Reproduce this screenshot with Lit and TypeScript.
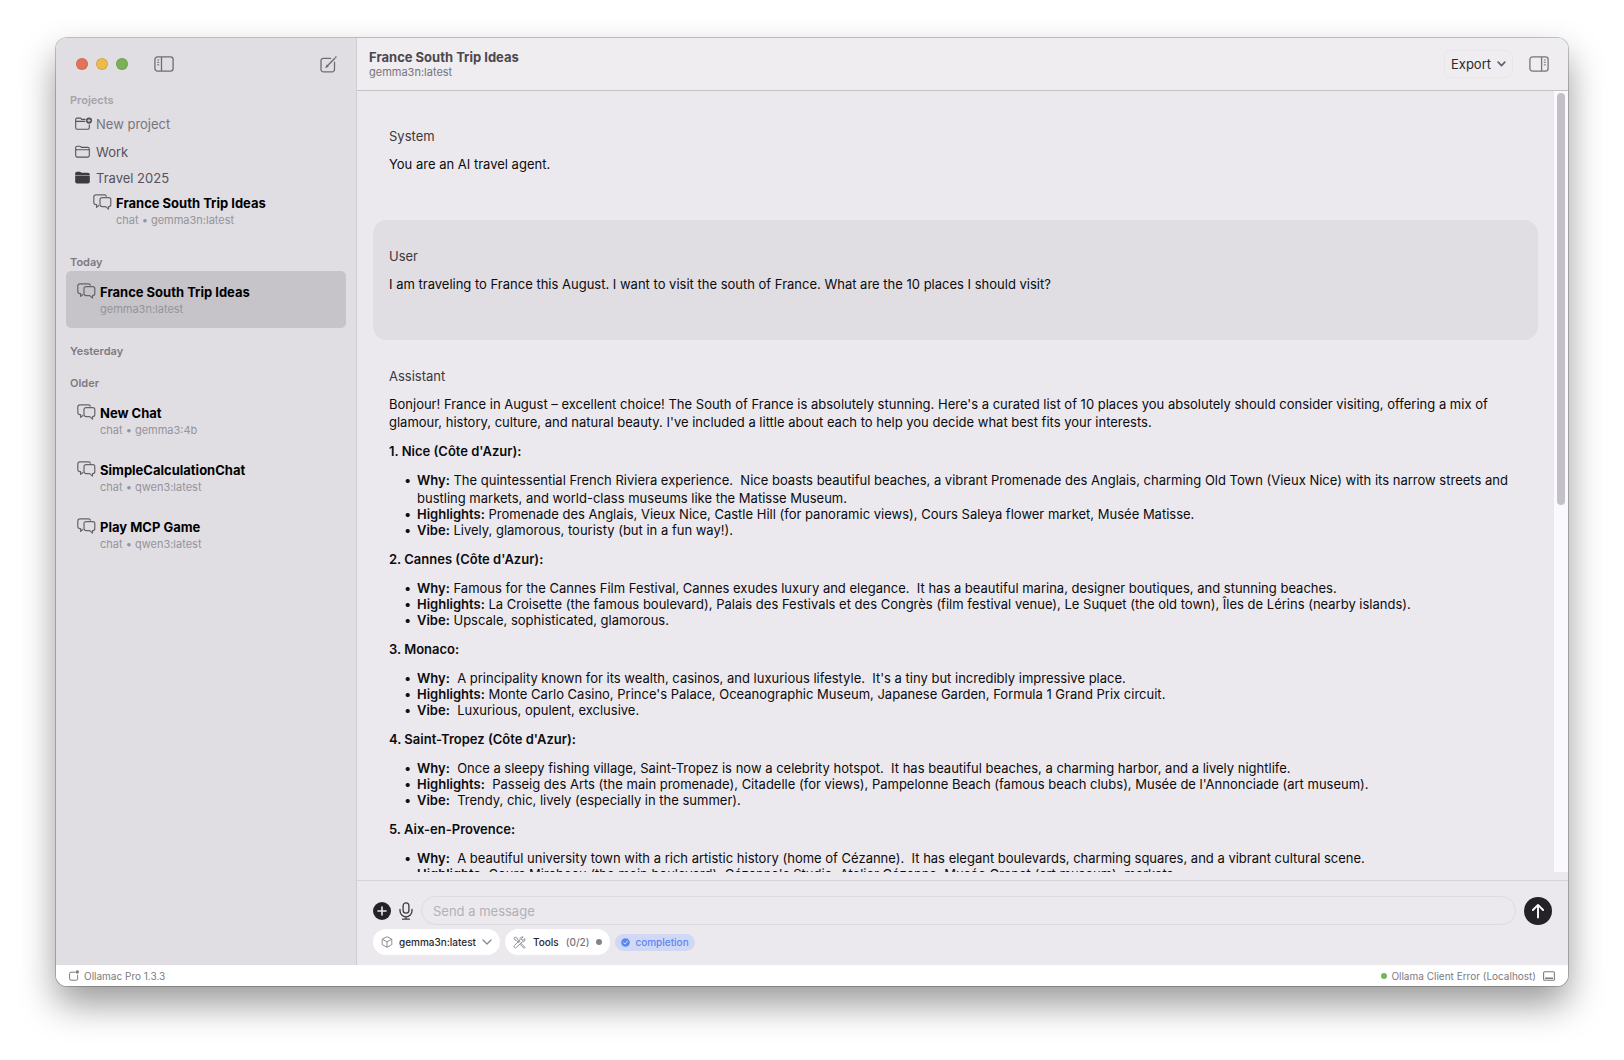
import { LitElement, html, css, svg } from "lit";
import { customElement, property } from "lit/decorators.js";

const NB = "\u00a0";

const icons: Record<string, unknown> = {
  sidebarLeft: svg`<svg width="20" height="16" viewBox="0 0 20 16" fill="none" stroke="currentColor" stroke-width="1.3"><rect x="0.9" y="0.9" width="18.2" height="14.2" rx="2.6"/><path d="M7.5 1v14"/><path d="M3.2 4h2M3.2 6.4h2M3.2 8.8h2" stroke-width="1"/></svg>`,
  sidebarRight: svg`<svg width="20" height="16" viewBox="0 0 20 16" fill="none" stroke="currentColor" stroke-width="1.3"><rect x="0.9" y="0.9" width="18.2" height="14.2" rx="2.6"/><path d="M12.6 1v14"/><path d="M14.8 4h2M14.8 6.4h2M14.8 8.8h2" stroke-width="1"/></svg>`,
  compose: svg`<svg width="17" height="17" viewBox="0 0 17 17" fill="none" stroke="currentColor" stroke-width="1.3" stroke-linecap="round"><path d="M10.6 2.3H3.4A2.4 2.4 0 0 0 1 4.7v8.7a2.4 2.4 0 0 0 2.4 2.4h8.7a2.4 2.4 0 0 0 2.4-2.4V6.2"/><path d="M7 10.2l7.6-7.7M6.4 10.9l.5-1.2.7.7z" stroke-width="1.4"/><path d="M15.7 1.3l.2-.2" stroke-width="1.6"/></svg>`,
  folderPlus: svg`<svg width="18" height="14" viewBox="0 0 18 14" fill="none" stroke="currentColor" stroke-width="1.1"><path d="M10.5 2.4H6.8L5.5 1.1H2A1.3 1.3 0 0 0 .7 2.4v8.4a1.5 1.5 0 0 0 1.5 1.5h10.6a1.5 1.5 0 0 0 1.5-1.5V7.6"/><path d="M.8 4.4h9.4"/><circle cx="14" cy="3.6" r="3.1" fill="currentColor" stroke="none"/><path d="M14 2.1v3M12.5 3.6h3" stroke="#e0dee3" stroke-width="0.9"/></svg>`,
  folder: svg`<svg width="16" height="14" viewBox="0 0 16 14" fill="none" stroke="currentColor" stroke-width="1.1"><path d="M.7 2.6A1.4 1.4 0 0 1 2.1 1.2h2.6c.4 0 .7.1 1 .4l.8.8h6.3a1.5 1.5 0 0 1 1.5 1.5v6.7a1.5 1.5 0 0 1-1.5 1.5H2.2a1.5 1.5 0 0 1-1.5-1.5z"/><path d="M.8 4.8h13.4"/></svg>`,
  folderFill: svg`<svg width="16" height="14" viewBox="0 0 16 14" fill="currentColor"><path d="M.2 3.9V2.6A1.8 1.8 0 0 1 2 .8h2.7c.5 0 .9.2 1.3.5l.6.5h6.3a1.9 1.9 0 0 1 1.9 1.9v.2z"/><path d="M.2 4.6h14.6v6.2a1.8 1.8 0 0 1-1.8 1.8H2a1.8 1.8 0 0 1-1.8-1.8z"/></svg>`,
  chats: svg`<svg width="19" height="16" viewBox="0 0 19 16" fill="none" stroke="currentColor" stroke-width="1.2" stroke-linejoin="round"><path d="M6.2 11.2L3.6 13.4v-2.8H2.8A2 2 0 0 1 .8 8.600V2.900a2 2 0 0 1 2-2h8.700a2 2 0 0 1 2 1.700"/><path d="M9 3.700h6.800a2 2 0 0 1 2 2v4.900a2 2 0 0 1-2 2h-.3v2.500l-2.800-2.500H9a2 2 0 0 1-2-2V5.700a2 2 0 0 1 2-2z"/></svg>`,
  chevronBold: svg`<svg width="9" height="6" viewBox="0 0 9 6" fill="none" stroke="currentColor" stroke-width="1.7" stroke-linecap="round" stroke-linejoin="round"><path d="M1.200 1.200L4.500 4.700 7.800 1.200"/></svg>`,
  chevron: svg`<svg width="10" height="6" viewBox="0 0 10 6" fill="none" stroke="currentColor" stroke-width="1.200" stroke-linecap="round" stroke-linejoin="round"><path d="M1 1l4 4 4-4"/></svg>`,
  plus: svg`<svg width="18" height="18" viewBox="0 0 18 18"><circle cx="9" cy="9" r="9" fill="#242227"/><path d="M9 5v8M5 9h8" stroke="#ebe9ee" stroke-width="1.600" stroke-linecap="round"/></svg>`,
  mic: svg`<svg width="14" height="18" viewBox="0 0 14 18" fill="none" stroke="currentColor" stroke-width="1.300" stroke-linecap="round"><rect x="4.100" y=".8" width="5.800" height="10.400" rx="2.900"/><path d="M1 7.500v1.300a6 6 0 0 0 12 0V7.500M7 14.800v2.400M3.600 17.200h6.800"/></svg>`,
  send: svg`<svg width="28" height="28" viewBox="0 0 28 28"><circle cx="14" cy="14" r="14" fill="#242227"/><path d="M14 20.500V8M8.900 13L14 7.900l5.100 5.100" fill="none" stroke="#fff" stroke-width="1.900" stroke-linecap="round" stroke-linejoin="round"/></svg>`,
  cube: svg`<svg width="12" height="12" viewBox="0 0 12 12" fill="none" stroke="currentColor" stroke-width=".9" stroke-linejoin="round"><path d="M6 .7l4.800 2.500v5.400L6 11.300 1.200 8.600V3.200z"/><path d="M1.300 3.300L6 5.800l4.700-2.500M6 5.800v5.400"/></svg>`,
  tools: svg`<svg width="13" height="13" viewBox="0 0 13 13" fill="none" stroke="currentColor" stroke-width=".9" stroke-linejoin="round"><path d="M1 2.200L2.200 1l2 1.100.3 1.100 2.300 2.300-1.100 1.100-2.400-2.300-1.200-.2z"/><path d="M7.900 7.300l3.800 3.600c.6.700-.4 1.700-1.100 1.100L7 8.200"/><path d="M11.900 2.700L10.200 4.300l-1.400-.2-.2-1.400L10.200 1C8.300.4 6.600 2 7.100 3.800L1.400 9.500c-1.200 1.300.7 3.100 2 2l5.700-5.700C11 6.300 12.500 4.600 11.900 2.700z"/></svg>`,
  check: svg`<svg width="9" height="9" viewBox="0 0 9 9"><circle cx="4.500" cy="4.500" r="4.300" fill="#5b87f2"/><path d="M2.600 4.700l1.400 1.400L6.500 3" fill="none" stroke="#d3dbf5" stroke-width="1" stroke-linecap="round" stroke-linejoin="round"/></svg>`,
  badge: svg`<svg width="10" height="11" viewBox="0 0 10 11" fill="none" stroke="currentColor" stroke-width="1"><path d="M6.300 2.200H2A1.400 1.400 0 0 0 .6 3.600v5.200A1.400 1.400 0 0 0 2 10.200h5.200a1.400 1.400 0 0 0 1.400-1.400V5"/><circle cx="8.300" cy="2" r="1.700" fill="currentColor" stroke="none"/></svg>`,
  dock: svg`<svg width="12" height="10" viewBox="0 0 12 10" fill="none" stroke="currentColor" stroke-width="1.100"><rect x=".6" y=".8" width="10.800" height="8.400" rx="1"/><path d="M2 7.300h8" stroke-width="1.600"/></svg>`,
};

@customElement("chat-link")
class ChatLink extends LitElement {
  @property() heading = "";
  @property() sub = "";
  @property({ type: Boolean, reflect: true }) selected = false;
  @property({ type: Boolean, reflect: true }) nested = false;

  static styles = css`
    :host { display: block; }
    .row {
      display: flex; gap: 4px; box-sizing: border-box; min-height: 57px;
      padding: 12px 11px 0; border-radius: 5px; color: #000; text-decoration: none;
    }
    :host([selected]) .row { background: #c7c4c9; }
    :host([nested]) .row { min-height: 42px; padding: 3px 27px 0; }
    .icon { display: flex; width: 19px; flex: none; color: #66636a; }
    .text { display: flex; flex-direction: column; min-width: 0; }
    .heading { font-size: 13px; line-height: 18px; font-weight: 700; }
    .sub { font-size: 11px; line-height: 16px; color: #96939a; }
  `;

  render() {
    return html`<a class="row" href="#">
      <span class="icon">${icons.chats}</span>
      <span class="text"><span class="heading">${this.heading}</span><span class="sub">${this.sub}</span></span>
    </a>`;
  }
}

@customElement("chat-message")
class ChatMessage extends LitElement {
  @property() role = "";
  @property({ type: Boolean, reflect: true }) shaded = false;

  static styles = css`
    :host { display: block; padding: 27px 16px 47px; border-radius: 14px; }
    :host([shaded]) { background: #e0dee3; }
    .role { margin: 0 0 10px; font-size: 13px; line-height: 18px; font-weight: 400; color: #3a383d; }
  `;

  render() {
    return html`<h2 class="role">${this.role}</h2><slot></slot>`;
  }
}

interface Place { title: string; items: [string, string][]; }

const places: Place[] = [
  { title: "1. Nice (Côte d'Azur):", items: [
    ["Why:", ` The quintessential French Riviera experience.${NB} Nice boasts beautiful beaches, a vibrant Promenade des Anglais, charming Old Town (Vieux Nice) with its narrow streets and bustling markets, and world-class museums like the Matisse Museum.`],
    ["Highlights:", " Promenade des Anglais, Vieux Nice, Castle Hill (for panoramic views), Cours Saleya flower market, Musée Matisse."],
    ["Vibe:", " Lively, glamorous, touristy (but in a fun way!)."] ] },
  { title: "2. Cannes (Côte d'Azur):", items: [
    ["Why:", ` Famous for the Cannes Film Festival, Cannes exudes luxury and elegance.${NB} It has a beautiful marina, designer boutiques, and stunning beaches.`],
    ["Highlights:", " La Croisette (the famous boulevard), Palais des Festivals et des Congrès (film festival venue), Le Suquet (the old town), Îles de Lérins (nearby islands)."],
    ["Vibe:", " Upscale, sophisticated, glamorous."] ] },
  { title: "3. Monaco:", items: [
    ["Why:", `${NB} A principality known for its wealth, casinos, and luxurious lifestyle.${NB} It's a tiny but incredibly impressive place.`],
    ["Highlights:", " Monte Carlo Casino, Prince's Palace, Oceanographic Museum, Japanese Garden, Formula 1 Grand Prix circuit."],
    ["Vibe:", `${NB} Luxurious, opulent, exclusive.`] ] },
  { title: "4. Saint-Tropez (Côte d'Azur):", items: [
    ["Why:", `${NB} Once a sleepy fishing village, Saint-Tropez is now a celebrity hotspot.${NB} It has beautiful beaches, a charming harbor, and a lively nightlife.`],
    ["Highlights:", `${NB} Passeig des Arts (the main promenade), Citadelle (for views), Pampelonne Beach (famous beach clubs), Musée de l'Annonciade (art museum).`],
    ["Vibe:", `${NB} Trendy, chic, lively (especially in the summer).`] ] },
  { title: "5. Aix-en-Provence:", items: [
    ["Why:", `${NB} A beautiful university town with a rich artistic history (home of Cézanne).${NB} It has elegant boulevards, charming squares, and a vibrant cultural scene.`],
    ["Highlights:", " Cours Mirabeau (the main boulevard), Cézanne's Studio, Atelier Cézanne, Musée Granet (art museum), markets."] ] },
];

@customElement("app-root")
class AppRoot extends LitElement {
  static styles = css`
    :host {
      display: flex; box-sizing: border-box; height: 100vh; padding: 38px 56px 74px;
      background: #fff; overflow: hidden;
      font-family: Inter, "Liberation Sans", sans-serif; font-size: 13px; line-height: 18px; color: #0c0b0e;
    }
    button { display: inline-flex; align-items: center; padding: 0; border: 0; background: none; font: inherit; color: inherit; }
    svg { display: block; }
    .window {
      flex: 1; min-width: 0; display: flex; flex-direction: column; overflow: hidden; border-radius: 11px;
      box-shadow: 0 0 0 1px rgba(0, 0, 0, 0.22), 0 18px 36px rgba(0, 0, 0, 0.4);
    }
    .body { flex: 1; min-height: 0; display: flex; }
    .sidebar {
      flex: none; width: 301px; box-sizing: border-box; padding: 0 10px;
      background: #e0dee3; border-right: 1px solid #cfcdd2;
    }
    .chrome { display: flex; align-items: center; height: 52px; padding: 0 9px 0 10px; color: #6e6b72; }
    .lights { display: flex; gap: 8px; margin-right: 26px; }
    .light { width: 12px; height: 12px; box-sizing: border-box; border-radius: 50%; border: 1px solid rgba(0, 0, 0, 0.1); }
    .red { background: #e2735a; }
    .yellow { background: #ecbb4d; }
    .green { background: #7ab255; }
    .compose { margin-left: auto; }
    .section { margin: 0; padding: 0 4px; font-size: 11px; line-height: 18px; font-weight: 600; color: #7d7a81; }
    .section.dim { padding-top: 1px; color: #a5a2a9; }
    .projects { margin: 0; padding: 0; list-style: none; }
    .project { display: flex; align-items: center; gap: 3px; height: 26px; padding: 0 9px; color: #55525a; }
    .project.new { height: 30px; color: #77747b; }
    .project.new .glyph { color: #56535a; }
    .project.open .glyph { color: #3c3a40; }
    .glyph { width: 18px; display: flex; }
    .today { margin-top: 20px; }
    .yesterday, .older { margin-top: 14px; }
    .main { flex: 1; min-width: 0; display: flex; flex-direction: column; background: #ebe9ee; }
    .header {
      flex: none; display: flex; align-items: center; justify-content: space-between; height: 52px;
      padding: 0 19px 0 12px; background: #efedf0; border-bottom: 1px solid #c3c0c6;
    }
    .title { margin: 0; font-size: 13px; line-height: 16px; font-weight: 700; color: #4b484f; }
    .model { margin: 0; font-size: 11px; line-height: 14px; color: #77747b; }
    .actions { display: flex; align-items: center; gap: 16px; color: #77747b; }
    .export {
      gap: 6px; height: 28px; padding: 0 6px; border: 1px solid #e9e7eb; border-radius: 6px; color: #2a282d;
    }
    .export svg { color: #66636a; }
    .viewport { flex: 1; min-height: 0; display: flex; }
    .thread { flex: 1; min-width: 0; overflow: hidden; padding: 9px 16px 0; }
    .track { flex: none; width: 14px; box-sizing: border-box; padding: 2px 3px; background: #faf9fe; }
    .thumb { height: 53%; border-radius: 4px; background: #c3c1c7; }
    .para { margin: 0; }
    .place { margin: 11px 0; font-size: 13px; line-height: 18px; font-weight: 600; }
    .facts { margin: 0; padding-left: 28px; list-style: none; }
    .fact { position: relative; }
    .fact::before { content: "•"; position: absolute; left: -13px; }
    .fact + .fact { margin-top: -2px; }
    .label { font-weight: 600; }
    .composer {
      flex: none; display: flex; flex-direction: column; gap: 4px; margin-top: 8px; padding: 15px 16px 10px; border-top: 1px solid #d5d3d8;
    }
    .entry { display: flex; align-items: center; gap: 8px; color: #3c3a40; }
    .message {
      flex: 1; min-width: 0; box-sizing: border-box; height: 29px; padding: 0 11px; border: 1px solid #dddbe0; border-radius: 15px;
      background: transparent; font: inherit; color: #0c0b0e; outline: none;
    }
    .message::placeholder { color: #b3b0b7; opacity: 1; }
    .options { display: flex; align-items: center; gap: 5px; font-size: 10px; line-height: 16px; font-weight: 500; color: #2a282d; }
    .pill { display: flex; align-items: center; height: 26px; border-radius: 13px; background: #fff; padding: 0 8px; }
    .pill svg { color: #85828a; }
    .picker { appearance: none; border: 0; margin: 0; padding: 0 6px; background: none; font: inherit; color: inherit; }
    .tools { gap: 7px; font-size: 10px; }
    .count { color: #77747b; }
    .dot { width: 6px; height: 6px; border-radius: 50%; background: #85828a; }
    .dot.ok { background: #78b45f; margin-right: 4px; }
    .chip {
      display: flex; align-items: center; gap: 5px; height: 17px; padding: 0 6px; border-radius: 9px;
      background: #d0d8f4; color: #5b87f2;
    }
    .status {
      flex: none; display: flex; align-items: center; justify-content: space-between; height: 21px; padding: 0 13px;
      background: #fff; font-size: 10px; line-height: 16px; color: #7d7a81;
    }
    .group { display: flex; align-items: center; }
    .version { gap: 5px; }
    .dock { margin-left: 7px; }
  `;

  render() {
    return html`
      <div class="window">
        <div class="body">
          <nav class="sidebar" aria-label="Chats">
            <div class="chrome">
              <div class="lights">
                <button class="light red" aria-label="Close"></button>
                <button class="light yellow" aria-label="Minimize"></button>
                <button class="light green" aria-label="Zoom"></button>
              </div>
              <button aria-label="Toggle sidebar">${icons.sidebarLeft}</button>
              <button class="compose" aria-label="New chat">${icons.compose}</button>
            </div>
            <h2 class="section dim">Projects</h2>
            <ul class="projects">
              <li class="project new"><span class="glyph">${icons.folderPlus}</span>New project</li>
              <li class="project"><span class="glyph">${icons.folder}</span>Work</li>
              <li class="project open"><span class="glyph">${icons.folderFill}</span>Travel 2025</li>
            </ul>
            <chat-link nested heading="France South Trip Ideas" sub="chat • gemma3n:latest"></chat-link>
            <h2 class="section today">Today</h2>
            <chat-link selected heading="France South Trip Ideas" sub="gemma3n:latest"></chat-link>
            <h2 class="section yesterday">Yesterday</h2>
            <h2 class="section older">Older</h2>
            <chat-link heading="New Chat" sub="chat • gemma3:4b"></chat-link>
            <chat-link heading="SimpleCalculationChat" sub="chat • qwen3:latest"></chat-link>
            <chat-link heading="Play MCP Game" sub="chat • qwen3:latest"></chat-link>
          </nav>
          <main class="main">
            <header class="header">
              <div>
                <h1 class="title">France South Trip Ideas</h1>
                <p class="model">gemma3n:latest</p>
              </div>
              <div class="actions">
                <button class="export" aria-haspopup="menu">Export ${icons.chevronBold}</button>
                <button aria-label="Toggle inspector">${icons.sidebarRight}</button>
              </div>
            </header>
            <div class="viewport">
              <div class="thread">
                <chat-message role="System"><p class="para">You are an AI travel agent.</p></chat-message>
                <chat-message role="User" shaded><p class="para">I am traveling to France this August. I want to visit the south of France. What are the 10 places I should visit?</p></chat-message>
                <chat-message role="Assistant">
                  <p class="para">Bonjour! France in August – excellent choice! The South of France is absolutely stunning. Here's a curated list of 10 places you absolutely should consider visiting, offering a mix of glamour, history, culture, and natural beauty. I've included a little about each to help you decide what best fits your interests.</p>
                  ${places.map((p) => html`
                    <h3 class="place">${p.title}</h3>
                    <ul class="facts">${p.items.map(([k, v]) => html`<li class="fact"><span class="label">${k}</span>${v}</li>`)}</ul>`)}
                </chat-message>
              </div>
              <div class="track"><div class="thumb"></div></div>
            </div>
            <form class="composer" @submit=${(e: Event) => e.preventDefault()}>
              <div class="entry">
                <button type="button" aria-label="Add attachment">${icons.plus}</button>
                <button type="button" aria-label="Dictate">${icons.mic}</button>
                <input class="message" type="text" placeholder="Send a message" aria-label="Send a message" />
                <button type="submit" aria-label="Send">${icons.send}</button>
              </div>
              <div class="options">
                <label class="pill">${icons.cube}<select class="picker" aria-label="Model"><option>gemma3n:latest</option></select>${icons.chevron}</label>
                <button type="button" class="pill tools">${icons.tools}<span>Tools</span><span class="count">(0/2)</span><span class="dot"></span></button>
                <span class="chip">${icons.check}completion</span>
              </div>
            </form>
          </main>
        </div>
        <footer class="status">
          <span class="group version">${icons.badge}Ollamac Pro 1.3.3</span>
          <span class="group"><span class="dot ok"></span>Ollama Client Error (Localhost)<span class="dock">${icons.dock}</span></span>
        </footer>
      </div>`;
  }
}
